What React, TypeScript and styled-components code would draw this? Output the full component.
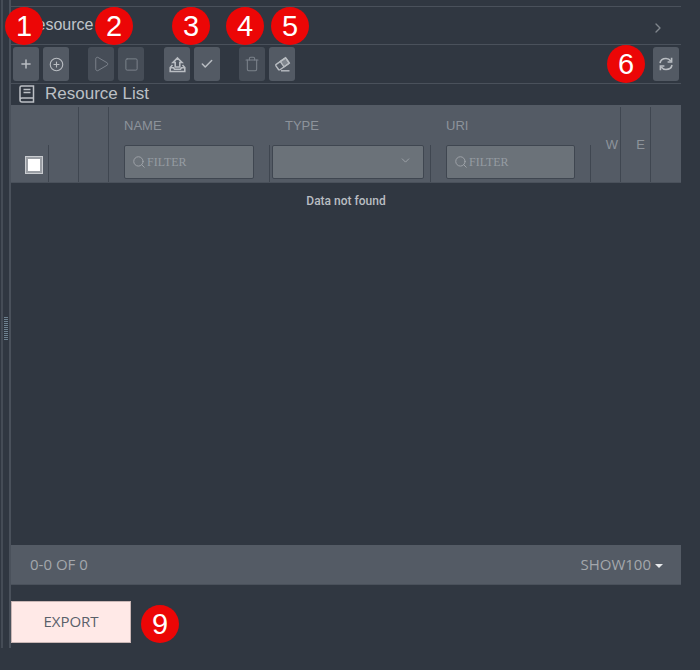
import React from "react";
import styled, { createGlobalStyle } from "styled-components";
import { Plus, CirclePlus, Play, Square, Check, Trash, ChevronRight, ChevronDown, Search } from "lucide-react";

const Global = createGlobalStyle`
  html, body { margin: 0; padding: 0; background: #303741; }
  * { box-sizing: border-box; }
`;

const Page = styled.div`
  position: relative;
  width: 700px;
  height: 670px;
  overflow: hidden;
  background: #303741;
  font-family: "Liberation Sans", Arial, sans-serif;
  display: flex;
  align-items: flex-start;
`;
const Rail = styled.div`
  width: 10px;
  height: 648px;
  margin-left: 1px;
  border-left: 2px solid #454c56;
  border-right: 2px solid #4a515b;
  flex: none;
  display: flex;
  align-items: center;
  justify-content: center;
`;
const Grip = styled.div`
  width: 4px;
  height: 23px;
  margin-top: 9px;
  background: repeating-linear-gradient(to bottom, #7e94a3 0 1px, transparent 1px 2px);
  opacity: .8;
`;
const Panel = styled.div`
  width: 670px;
  flex: none;
  padding-top: 6px;
  display: flex;
  flex-direction: column;
`;
const Heading = styled.div`
  height: 39px;
  border-top: 1px solid #4a515b;
  border-bottom: 1px solid #4a515b;
  display: flex;
  align-items: center;
  justify-content: space-between;
  padding: 0 15px 2px 14px;
  color: #c1c5ca;
  font-size: 16px;
`;
const Caret = styled(ChevronRight)`
  color: #81868d;
  margin-top: 6px;
`;
const Toolbar = styled.div`
  height: 39px;
  border-bottom: 1px solid #4a515b;
  display: flex;
  align-items: center;
  padding: 0 2px;
`;
const Group = styled.div<{ $gap: number }>`
  display: flex;
  gap: 4px;
  margin-right: ${p => p.$gap}px;
`;
const ToolButton = styled.div<{ $dim?: boolean }>`
  width: 26px;
  height: 34px;
  border-radius: 3px;
  background: ${p => (p.$dim ? "#464d57" : "#535a64")};
  color: ${p => (p.$dim ? "#7b828b" : "#b9bdc2")};
  display: flex;
  align-items: center;
  justify-content: center;
`;
const Spacer = styled.div`
  flex: 1;
`;
const TitleRow = styled.div`
  height: 21px;
  display: flex;
  align-items: center;
  gap: 10px;
  padding: 0 0 2px 8px;
  color: #bcc0c5;
  font-size: 17px;
`;
const HeaderGrid = styled.div`
  height: 78px;
  background: #545b65;
  border-bottom: 1px solid #4a515b;
  padding-top: 2px;
  display: grid;
  grid-template-columns: 38px 30px 30px 161px 161px 160px 30px 30px 30px;
`;
const Cell = styled.div<{ $full?: boolean; $last?: boolean }>`
  display: flex;
  flex-direction: column;
  border-right: ${p => (p.$full && !p.$last ? "1px solid #3f4650" : "none")};
`;
const LabelSlot = styled.div`
  height: 38px;
  padding: 11px 0 0 15px;
  font-size: 13px;
  color: #8d939b;
  line-height: 15px;
`;
const FilterSlot = styled.div<{ $edge?: boolean; $pad?: string }>`
  flex: 1;
  border-right: ${p => (p.$edge ? "1px solid #3f4650" : "none")};
  padding: ${p => p.$pad ?? "0"};
`;
const CheckSlot = styled(FilterSlot)`
  display: flex;
  align-items: center;
  justify-content: center;
  padding: 0 0 0 8px;
`;
const Tick = styled.div`
  width: 18px;
  height: 18px;
  background: #fff;
  border: 3px solid #9a9ea4;
  outline: 1px solid #c9ccd0;
  outline-offset: -1px;
  margin-top: 3px;
`;
const FilterBox = styled.div`
  height: 34px;
  border: 1px solid #3f4650;
  border-radius: 2px;
  background: #6b7279;
  display: flex;
  align-items: center;
  padding-left: 7px;
  gap: 1px;
  color: #969ca2;
  font-family: "Liberation Serif", serif;
  font-size: 12px;
`;
const Magnifier = styled(Search)`
  color: #a0a5aa;
`;
const SelectBox = styled(FilterBox)`
  justify-content: flex-end;
  padding: 0 11px 3px 0;
  color: #a6abb0;
`;
const SideLabel = styled.div`
  flex: 1;
  display: flex;
  align-items: center;
  justify-content: center;
  padding: 0 0 1px 13px;
  font-size: 13px;
  color: #8d939b;
`;
const SideLabelE = styled(SideLabel)`
  padding-left: 10px;
`;
const Body = styled.div`
  height: 362px;
  padding-top: 11px;
  text-align: center;
  font-family: Roboto, sans-serif;
  font-size: 12px;
  font-weight: 500;
  color: #b9bdc2;
  line-height: 14px;
`;
const Pager = styled.div`
  height: 40px;
  background: #545b65;
  border-bottom: 1px solid #4a515b;
  display: flex;
  align-items: center;
  justify-content: space-between;
  padding: 0 18px 2px 19px;
  font-family: "Open Sans", sans-serif;
  font-size: 15px;
  color: #a3a7ac;
`;
const ShowWrap = styled.div`
  display: flex;
  align-items: center;
  gap: 4px;
`;
const DownTri = styled.span`
  width: 0;
  height: 0;
  border-left: 4px solid transparent;
  border-right: 4px solid transparent;
  border-top: 4px solid #e8eaec;
  margin-top: 4px;
`;
const ExportButton = styled.div`
  margin-top: 16px;
  width: 120px;
  height: 42px;
  background: #ffe9e7;
  border: 1px solid #c9b6b5;
  display: flex;
  align-items: center;
  justify-content: center;
  padding-bottom: 2px;
  font-family: "Open Sans", sans-serif;
  font-size: 15px;
  color: #59606a;
`;
const Marker = styled.div<{ $x: number; $y: number }>`
  position: absolute;
  left: ${p => p.$x}px;
  top: ${p => p.$y}px;
  width: 38px;
  height: 38px;
  border-radius: 50%;
  background: #ec0606;
  color: #fff;
  font-size: 29px;
  line-height: 38px;
  text-align: center;
`;

const UploadTray = () => (
  <svg width="17" height="17" viewBox="0 0 17 17" fill="none" stroke="currentColor" strokeWidth="1.6">
    <path d="M8.5 2 L13 6.5 H10.8 V11 H6.2 V6.5 H4 Z" />
    <path d="M3.5 9 L1.2 11.5 V15.5 H15.8 V11.5 L13.5 9" />
    <path d="M1.2 11.8 H4.5 L5.5 13.3 H11.5 L12.5 11.8 H15.8" />
  </svg>
);
const EraserIcon = () => (
  <svg width="17" height="17" viewBox="0 0 17 17" fill="none" stroke="currentColor" strokeWidth="1.4">
    <g transform="rotate(-35 8 8)">
      <rect x="2" y="5" width="12.5" height="6.5" rx="1" />
      <rect x="8" y="5" width="6.5" height="6.5" fill="currentColor" fillOpacity="0.45" />
    </g>
    <path d="M7 14.8 H15.5" />
  </svg>
);
const SyncIcon = () => (
  <svg width="16" height="16" viewBox="0 0 16 16" fill="none" stroke="currentColor" strokeWidth="1.6">
    <path d="M2 7 C2.6 3.8 5 2.5 8 2.5 C10.2 2.5 11.6 3.4 12.8 5" />
    <path d="M13.6 1.8 V6 H9.6" />
    <path d="M14 9 C13.4 12.2 11 13.5 8 13.5 C5.8 13.5 4.4 12.6 3.2 11" />
    <path d="M2.4 14.2 V10 H6.4" />
  </svg>
);
const BookIcon = () => (
  <svg width="16" height="18" viewBox="0 0 16 18" fill="none" stroke="currentColor" strokeWidth="1.5">
    <path d="M1 15 V2.5 Q1 1 2.5 1 H14.5 V17 H3 Q1 17 1 15 Q1 13 3 13 H14.5" />
    <path d="M4.5 4.5 H11.5 M4.5 7.5 H11.5" />
  </svg>
);

const marks: [string, number, number][] = [
  ["1", 5, 7], ["2", 95, 7], ["3", 172, 7], ["4", 226, 7], ["5", 271, 7], ["6", 607, 45], ["9", 141, 605],
];

export default function App() {
  return (
    <Page>
      <Global />
      <Rail><Grip /></Rail>
      <Panel>
        <Heading>
          <span>Resource</span>
          <Caret size={16} strokeWidth={2} />
        </Heading>
        <Toolbar>
          <Group $gap={19}>
            <ToolButton><Plus size={14} strokeWidth={2.6} /></ToolButton>
            <ToolButton><CirclePlus size={15} strokeWidth={1.8} /></ToolButton>
          </Group>
          <Group $gap={20}>
            <ToolButton $dim><Play size={18} strokeWidth={1.3} /></ToolButton>
            <ToolButton $dim><Square size={15} strokeWidth={1.6} /></ToolButton>
          </Group>
          <Group $gap={19}>
            <ToolButton><UploadTray /></ToolButton>
            <ToolButton><Check size={14} strokeWidth={2.6} /></ToolButton>
          </Group>
          <Group $gap={0}>
            <ToolButton $dim><Trash size={16} strokeWidth={1.6} /></ToolButton>
            <ToolButton><EraserIcon /></ToolButton>
          </Group>
          <Spacer />
          <ToolButton><SyncIcon /></ToolButton>
        </Toolbar>
        <TitleRow>
          <BookIcon />
          <span>Resource List</span>
        </TitleRow>
        <HeaderGrid>
          <Cell>
            <LabelSlot />
            <CheckSlot $edge><Tick /></CheckSlot>
          </Cell>
          <Cell $full />
          <Cell $full />
          <Cell>
            <LabelSlot>NAME</LabelSlot>
            <FilterSlot $edge $pad="0 15px 0 15px">
              <FilterBox><Magnifier size={14} strokeWidth={1.6} />FILTER</FilterBox>
            </FilterSlot>
          </Cell>
          <Cell>
            <LabelSlot>TYPE</LabelSlot>
            <FilterSlot $edge $pad="0 6px 0 2px">
              <SelectBox><ChevronDown size={13} strokeWidth={1.5} /></SelectBox>
            </FilterSlot>
          </Cell>
          <Cell>
            <LabelSlot>URI</LabelSlot>
            <FilterSlot $edge $pad="0 15px 0 15px">
              <FilterBox><Magnifier size={14} strokeWidth={1.6} />FILTER</FilterBox>
            </FilterSlot>
          </Cell>
          <Cell $full><SideLabel>W</SideLabel></Cell>
          <Cell $full><SideLabelE>E</SideLabelE></Cell>
          <Cell $full $last />
        </HeaderGrid>
        <Body>Data not found</Body>
        <Pager>
          <span>0-0 OF 0</span>
          <ShowWrap><span>SHOW100</span><DownTri /></ShowWrap>
        </Pager>
        <ExportButton>EXPORT</ExportButton>
      </Panel>
      {marks.map(([t, x, y]) => (
        <Marker key={t} $x={x} $y={y}>{t}</Marker>
      ))}
    </Page>
  );
}
